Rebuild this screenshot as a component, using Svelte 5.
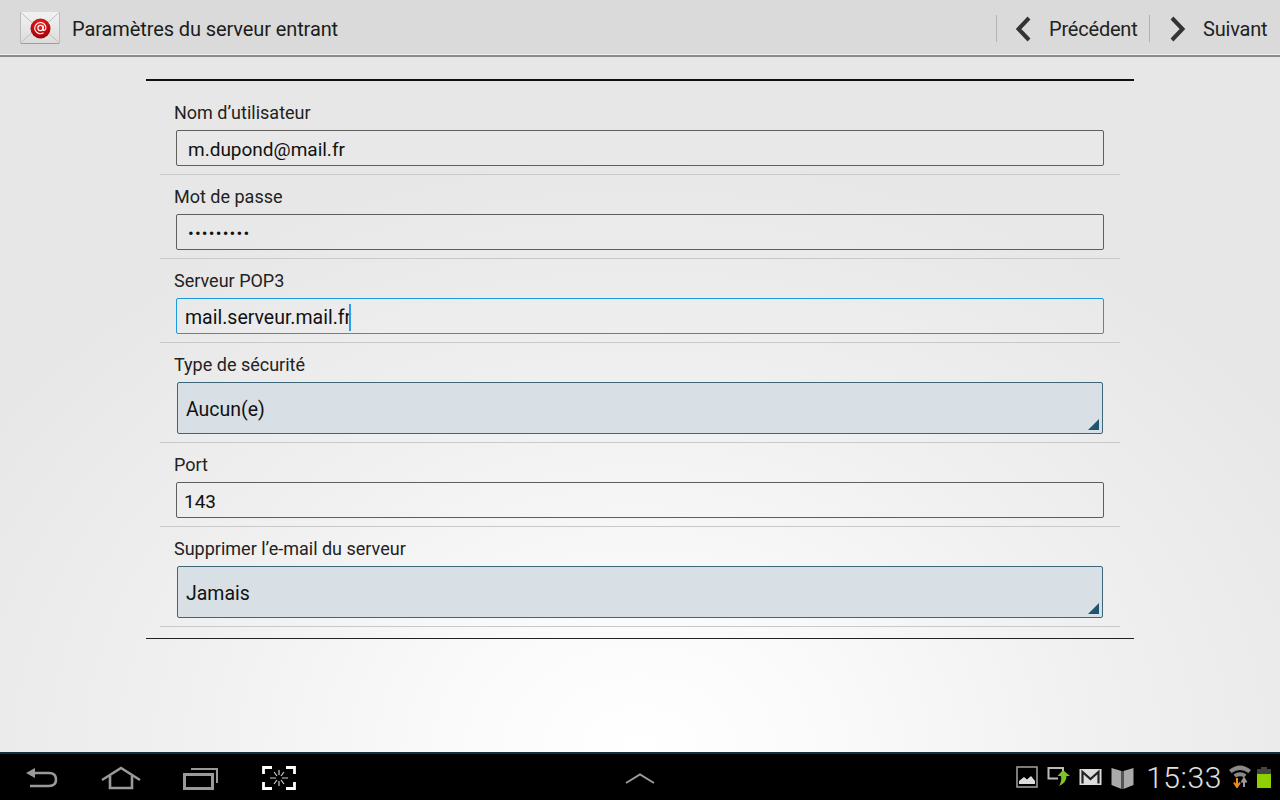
<script>
	const fields = [
		{ label: 'Nom d’utilisateur', value: 'm.dupond@mail.fr', kind: 'text' },
		{ label: 'Mot de passe', value: '•••••••••', kind: 'password' },
		{ label: 'Serveur POP3', value: 'mail.serveur.mail.fr', kind: 'focus' },
		{ label: 'Type de sécurité', value: 'Aucun(e)', kind: 'select' },
		{ label: 'Port', value: '143', kind: 'port' },
		{ label: 'Supprimer l’e-mail du serveur', value: 'Jamais', kind: 'select' }
	];
</script>

<div class="screen">
	<header class="action-bar">
		<svg class="app-icon" width="40" height="34" viewBox="0 0 40 34">
			<defs>
				<linearGradient id="env" x1="0" y1="0" x2="0" y2="1">
					<stop offset="0" stop-color="#f2f2f2" />
					<stop offset="1" stop-color="#dcdcdc" />
				</linearGradient>
				<radialGradient id="red" cx="0.5" cy="0.3" r="0.7">
					<stop offset="0" stop-color="#f42020" />
					<stop offset="1" stop-color="#a00008" />
				</radialGradient>
			</defs>
			<rect x="0.5" y="2" width="39" height="32" rx="1" fill="#9c9c9c" />
			<rect x="1" y="2" width="38" height="31" rx="1" fill="url(#env)" />
			<path d="M1.5 32 L15 20 M38.5 32 L25 20 M1.5 3 L20 20 L38.5 3" fill="none" stroke="#c0c0c0" stroke-width="1" />
			<circle cx="20.5" cy="18.5" r="10" fill="url(#red)" />
			<circle cx="20.5" cy="18" r="2.6" fill="none" stroke="#fff" stroke-width="1.2" />
			<path d="M23.1 15.5 V19.5 Q23.3 21 25 20 Q26.2 18.8 25.7 16.5 A5.6 5.6 0 1 0 23.5 22.8" fill="none" stroke="#fff" stroke-width="1.1" />
		</svg>
		<h1>Paramètres du serveur entrant</h1>
		<nav>
			<button class="nav-btn prev">
				<svg width="18" height="26" viewBox="0 0 18 26"><path d="M15 2 L4.5 13 L15 24" fill="none" stroke="#333" stroke-width="4" /></svg>
				<span>Précédent</span>
			</button>
			<button class="nav-btn next">
				<svg width="18" height="26" viewBox="0 0 18 26"><path d="M3 2 L13.5 13 L3 24" fill="none" stroke="#333" stroke-width="4" /></svg>
				<span>Suivant</span>
			</button>
		</nav>
	</header>

	<main class="content">
		<form class="panel">
			{#each fields as f}
				<div class="row">
					<div class="label">{f.label}</div>
					{#if f.kind === 'select'}
						<div class="select">{f.value}</div>
					{:else}
						<div class="input {f.kind}">
							<span>{f.value}</span>{#if f.kind === 'focus'}<i class="caret"></i>{/if}
						</div>
					{/if}
				</div>
			{/each}
		</form>
	</main>

	<footer class="system-bar">
		<div class="soft-keys">
			<svg width="34" height="24" viewBox="0 0 34 24"><path d="M9 7 H24 Q31 7 31 13.5 Q31 20 24 20 H5" fill="none" stroke="#9a9a9a" stroke-width="2.6" /><path d="M1 7 L10 2 V12 Z" fill="#9a9a9a" /></svg>
			<svg width="40" height="24" viewBox="0 0 40 24"><path d="M1 14 L20 2 L39 14" fill="none" stroke="#9a9a9a" stroke-width="2.6" /><path d="M9 10 V22 H31 V10" fill="none" stroke="#9a9a9a" stroke-width="2.6" /></svg>
			<svg width="37" height="24" viewBox="0 0 37 24"><rect x="1.5" y="8.5" width="28" height="14" fill="none" stroke="#9a9a9a" stroke-width="3" /><path d="M8 3 H34 V17" fill="none" stroke="#9a9a9a" stroke-width="2" /></svg>
			<svg width="34" height="24" viewBox="0 0 34 24"><path d="M1.5 8 V1.5 H10 M24 1.5 H32.5 V8 M32.5 16 V22.5 H24 M10 22.5 H1.5 V16" fill="none" stroke="#fff" stroke-width="2.8" /><path d="M17 4 V9 M17 15 V20 M8 12 H14 M20 12 H26 M12 6 L15 10 M22 6 L19 10 M12 18 L15 14 M22 18 L19 14" stroke="#ccc" stroke-width="1.2" /></svg>
		</div>
		<svg class="chevron" width="30" height="12" viewBox="0 0 30 12"><path d="M1 11 L15 2.5 L29 11" fill="none" stroke="#9a9a9a" stroke-width="2" /></svg>
		<div class="status">
			<svg width="22" height="22" viewBox="0 0 22 22"><rect x="1" y="1" width="20" height="20" fill="none" stroke="#9a9a9a" stroke-width="1.6" /><path d="M3 18 V15 L8 11 L11 13.5 L15 10 L19 15 V18 Z" fill="#ddd" /></svg>
			<svg width="23" height="22" viewBox="0 0 23 22"><path d="M11 12.5 H1.5 V2 H16 V5" fill="none" stroke="#bbb" stroke-width="2" /><path d="M16 4 L23 10 H19.5 Q19.5 17 12 20 Q15 15 14 10 H10.5 Z" fill="#7fc41c" /></svg>
			<svg width="23" height="18" viewBox="0 0 23 18"><rect x="0.5" y="1" width="22" height="16" fill="#ddd" /><path d="M3.5 15.5 V4 L11.5 11 L19.5 4 V15.5" fill="none" stroke="#222" stroke-width="2.2" /></svg>
			<svg width="23" height="23" viewBox="0 0 23 23"><path d="M0.5 2 L10.5 5 V23 L0.5 19 Z M22.5 2 L12.5 5 V23 L22.5 19 Z" fill="#aaa" /><path d="M11.5 5 V23" stroke="#555" /></svg>
			<span class="clock">15:33</span>
			<svg class="wifi" width="22" height="24" viewBox="0 0 22 24">
				<path d="M0 6 Q11 -3 22 6 L19.5 9 Q11 3 2.5 9 Z M4.5 10.5 Q11 6 17.5 10.5 L15 13.5 Q11 11 7 13.5 Z" fill="#8a8a8a" />
				<path d="M8 14 V22 M5 18.5 L8 23 L11 18.5" fill="none" stroke="#f08a1c" stroke-width="2" />
				<path d="M15 23 V16 M12.5 18.5 L15 14.5 L17.5 18.5" fill="none" stroke="#999" stroke-width="2" />
			</svg>
			<div class="battery"><div class="level"></div></div>
		</div>
	</footer>
</div>

<style>
	:global(body) {
		margin: 0;
	}

	.screen {
		width: 1280px;
		height: 800px;
		display: flex;
		flex-direction: column;
		overflow: hidden;
		font-family: Roboto, 'Liberation Sans', sans-serif;
		color: #111;
	}

	.action-bar {
		height: 55px;
		flex: none;
		display: flex;
		align-items: center;
		background: #dadada;
		border-bottom: 2px solid #8a8a8a;
		box-shadow: inset 0 -1px 0 #f0f0f0;
		padding-left: 20px;
	}

	.app-icon {
		margin-top: -1px;
	}

	h1 {
		margin: 0 0 0 12px;
		padding-top: 2px;
		font-size: 20px;
		font-weight: 400;
		letter-spacing: -0.1px;
		color: #1c1c1c;
		flex: 1;
	}

	nav {
		display: flex;
		align-items: center;
		height: 27px;
		margin-top: 2px;
	}

	.nav-btn {
		display: flex;
		align-items: center;
		height: 27px;
		border: 0;
		border-left: 1px solid #b4b4b4;
		background: none;
		padding: 0;
		font: inherit;
		font-size: 20px;
		letter-spacing: -0.2px;
		color: #222;
	}

	.prev {
		width: 153px;
		padding-left: 17px;
		box-sizing: border-box;
	}

	.next {
		width: 131px;
		padding-left: 19px;
		box-sizing: border-box;
	}

	.nav-btn span {
		margin-left: 17px;
	}

	.next span {
		margin-left: 16px;
	}

	.content {
		flex: 1;
		background: radial-gradient(ellipse 780px 600px at 50% 100%, #ffffff 0%, #fafafa 25%, #f0f0f0 60%, #e7e7e7 100%);
		padding: 22px 146px 0;
	}

	.panel {
		border-top: 2px solid #111;
		border-bottom: 1px solid #222;
		padding: 10px 14px 11px;
	}

	.row {
		border-bottom: 1px solid #c9c9c9;
		padding: 0 16px 8px 14px;
	}

	.label {
		height: 39px;
		padding-top: 12px;
		box-sizing: border-box;
		font-size: 18px;
		line-height: 20px;
		color: #222;
	}

	.input {
		height: 36px;
		margin-left: 2px;
		box-sizing: border-box;
		display: flex;
		align-items: center;
		padding: 2px 0 0 11px;
		border: 1px solid #5e5e5e;
		border-radius: 2px;
		background: rgba(255, 255, 255, 0.05);
		font-size: 19px;
		color: #111;
	}

	.input.port {
		padding-left: 7px;
	}

	.input.focus {
		padding-left: 8px;
		border-color: #1a9ae0;
		font-size: 19.5px;
	}

	.input.password {
		font-size: 17px;
		letter-spacing: 1.2px;
	}

	.caret {
		width: 2px;
		height: 27px;
		margin-left: -2px;
		background: #2f9ce8;
	}

	.select {
		height: 52px;
		margin: 0 1px 0 3px;
		box-sizing: border-box;
		display: flex;
		align-items: center;
		padding: 2px 0 0 8px;
		border: 1px solid #3d6678;
		border-radius: 2px;
		background: #d8e0e6;
		font-size: 19.5px;
		color: #111;
		position: relative;
	}

	.select::after {
		content: '';
		position: absolute;
		right: 3px;
		bottom: 3px;
		width: 0;
		height: 0;
		border-left: 11px solid transparent;
		border-bottom: 11px solid #1f5570;
	}

	.system-bar {
		height: 46px;
		flex: none;
		background: #000;
		border-top: 2px solid #10303f;
		display: grid;
		grid-template-columns: 1fr auto 1fr;
		align-items: center;
	}

	.soft-keys {
		display: flex;
		align-items: center;
		gap: 42px;
		padding-left: 25px;
		margin-top: 1px;
	}

	.chevron {
		margin-top: 2px;
	}

	.status {
		display: flex;
		align-items: center;
		justify-content: flex-end;
		gap: 9px;
		padding-right: 9px;
	}

	.clock {
		font-size: 30px;
		font-weight: 300;
		color: #e0e0e0;
		margin: 0 -2px 0 3px;
		letter-spacing: 0.6px;
	}

	.wifi {
		margin-top: -2px;
	}

	.battery {
		width: 14px;
		height: 19px;
		background: #444;
		position: relative;
		margin-left: -3px;
		margin-top: 2px;
	}

	.battery::before {
		content: '';
		position: absolute;
		top: -2px;
		left: 4px;
		width: 6px;
		height: 2px;
		background: #444;
	}

	.level {
		position: absolute;
		left: 0;
		right: 0;
		bottom: 0;
		height: 14px;
		background: #8fd000;
	}
</style>
